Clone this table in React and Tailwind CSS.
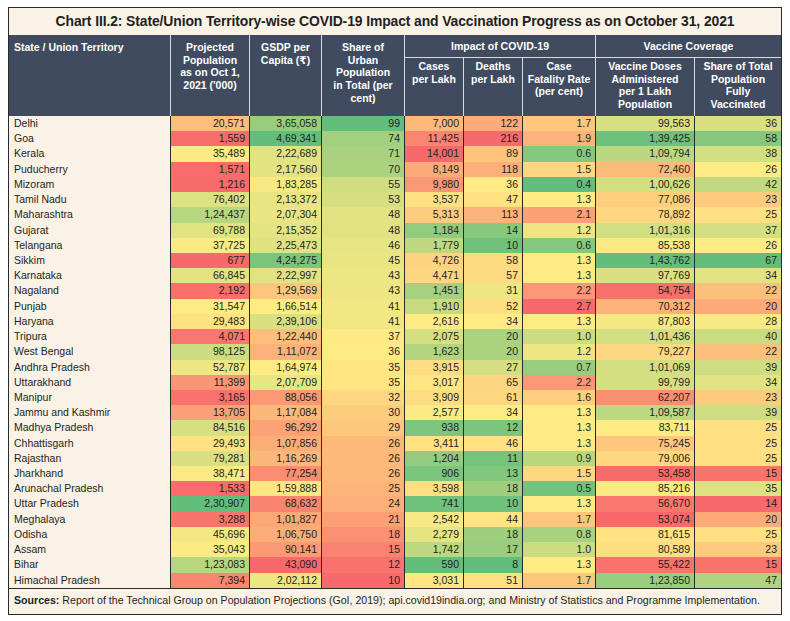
import React from "react";

const rows = [
  ["Delhi", "20,571", "3,65,058", "99", "7,000", "122", "1.7", "99,563", "36"],
  ["Goa", "1,559", "4,69,341", "74", "11,425", "216", "1.9", "1,39,425", "58"],
  ["Kerala", "35,489", "2,22,689", "71", "14,001", "89", "0.6", "1,09,794", "38"],
  ["Puducherry", "1,571", "2,17,560", "70", "8,149", "118", "1.5", "72,460", "26"],
  ["Mizoram", "1,216", "1,83,285", "55", "9,980", "36", "0.4", "1,00,626", "42"],
  ["Tamil Nadu", "76,402", "2,13,372", "53", "3,537", "47", "1.3", "77,086", "23"],
  ["Maharashtra", "1,24,437", "2,07,304", "48", "5,313", "113", "2.1", "78,892", "25"],
  ["Gujarat", "69,788", "2,15,352", "48", "1,184", "14", "1.2", "1,01,316", "37"],
  ["Telangana", "37,725", "2,25,473", "46", "1,779", "10", "0.6", "85,538", "26"],
  ["Sikkim", "677", "4,24,275", "45", "4,726", "58", "1.3", "1,43,762", "67"],
  ["Karnataka", "66,845", "2,22,997", "43", "4,471", "57", "1.3", "97,769", "34"],
  ["Nagaland", "2,192", "1,29,569", "43", "1,451", "31", "2.2", "54,754", "22"],
  ["Punjab", "31,547", "1,66,514", "41", "1,910", "52", "2.7", "70,312", "20"],
  ["Haryana", "29,483", "2,39,106", "41", "2,616", "34", "1.3", "87,803", "28"],
  ["Tripura", "4,071", "1,22,440", "37", "2,075", "20", "1.0", "1,01,436", "40"],
  ["West Bengal", "98,125", "1,11,072", "36", "1,623", "20", "1.2", "79,227", "22"],
  ["Andhra Pradesh", "52,787", "1,64,974", "35", "3,915", "27", "0.7", "1,01,069", "39"],
  ["Uttarakhand", "11,399", "2,07,709", "35", "3,017", "65", "2.2", "99,799", "34"],
  ["Manipur", "3,165", "88,056", "32", "3,909", "61", "1.6", "62,207", "23"],
  ["Jammu and Kashmir", "13,705", "1,17,084", "30", "2,577", "34", "1.3", "1,09,587", "39"],
  ["Madhya Pradesh", "84,516", "96,292", "29", "938", "12", "1.3", "83,711", "25"],
  ["Chhattisgarh", "29,493", "1,07,856", "26", "3,411", "46", "1.3", "75,245", "25"],
  ["Rajasthan", "79,281", "1,16,269", "26", "1,204", "11", "0.9", "79,006", "25"],
  ["Jharkhand", "38,471", "77,254", "26", "906", "13", "1.5", "53,458", "15"],
  ["Arunachal Pradesh", "1,533", "1,59,888", "25", "3,598", "18", "0.5", "85,216", "35"],
  ["Uttar Pradesh", "2,30,907", "68,632", "24", "741", "10", "1.3", "56,670", "14"],
  ["Meghalaya", "3,288", "1,01,827", "21", "2,542", "44", "1.7", "53,074", "20"],
  ["Odisha", "45,696", "1,06,750", "18", "2,279", "18", "0.8", "81,615", "25"],
  ["Assam", "35,043", "90,141", "15", "1,742", "17", "1.0", "80,589", "23"],
  ["Bihar", "1,23,083", "43,090", "12", "590", "8", "1.3", "55,422", "15"],
  ["Himachal Pradesh", "7,394", "2,02,112", "10", "3,031", "51", "1.7", "1,23,850", "47"],
];

// true = higher is better (green), false = higher is worse (red)
const goodHigh = [true, true, true, false, false, false, true, true];

const RED = [248, 105, 107];
const YELLOW = [255, 235, 132];
const GREEN = [99, 190, 123];

const num = (s) => parseFloat(s.replace(/,/g, ""));

const mix = (a, b, t) =>
  `rgb(${a.map((v, i) => Math.round(v + (b[i] - v) * t)).join(",")})`;

// excel style 3 colour scale, midpoint = median
const scales = goodHigh.map((good, c) => {
  const vals = rows.map((r) => num(r[c + 1])).sort((x, y) => x - y);
  const min = vals[0];
  const max = vals[vals.length - 1];
  const mid = vals[Math.floor(vals.length / 2)];
  const lowCol = good ? RED : GREEN;
  const highCol = good ? GREEN : RED;
  return (v) => {
    if (v <= mid) return mix(lowCol, YELLOW, mid === min ? 1 : (v - min) / (mid - min));
    return mix(YELLOW, highCol, (v - mid) / (max - mid));
  };
});

const cols = "grid-cols-[162px_79px_72px_83px_59px_59px_73px_99px_86px]";

const HeadCell = ({ children, className = "" }) => (
  <div className={`border-r border-white/80 text-center ${className}`}>{children}</div>
);

export default function App() {
  return (
    <div className="w-[790px] h-[621px] bg-white pt-[7px] pl-[8px] font-['Liberation_Sans','DejaVu_Sans',sans-serif] text-[#231f20]">
      <div className="w-[774px] border border-[#2a2a2a] bg-[#faf2e6]">
        <div className="h-[27px] flex items-center justify-center text-[13.9px] font-bold tracking-[-0.1px]">
          Chart III.2: State/Union Territory-wise COVID-19 Impact and Vaccination Progress as on October 31, 2021
        </div>

        <div className={`grid ${cols} grid-rows-[23px_58px] bg-[#404b60] text-white font-bold text-[10.5px] leading-[12.7px]`}>
          <div className="row-span-2 border-r border-white/80 pl-[5px] pt-[6px]">State / Union Territory</div>
          <HeadCell className="row-span-2 pt-[6px]">
            Projected<br />Population<br />as on Oct 1,<br />2021 ('000)
          </HeadCell>
          <HeadCell className="row-span-2 pt-[6px]">
            GSDP per<br />Capita (₹)
          </HeadCell>
          <HeadCell className="row-span-2 pt-[6px]">
            Share of<br />Urban<br />Population<br />in Total (per<br />cent)
          </HeadCell>
          <HeadCell className="col-span-3 border-b flex items-center justify-center">Impact of COVID-19</HeadCell>
          <div className="col-span-2 border-b border-white/80 flex items-center justify-center">Vaccine Coverage</div>
          <HeadCell className="pt-[2px]">
            Cases<br />per Lakh
          </HeadCell>
          <HeadCell className="pt-[2px]">
            Deaths<br />per Lakh
          </HeadCell>
          <HeadCell className="pt-[2px]">
            Case<br />Fatality Rate<br />(per cent)
          </HeadCell>
          <HeadCell className="pt-[2px]">
            Vaccine Doses<br />Administered<br />per 1 Lakh<br />Population
          </HeadCell>
          <div className="pt-[2px] text-center">
            Share of Total<br />Population<br />Fully<br />Vaccinated
          </div>
        </div>

        <div className="text-[10.5px]">
          {rows.map((r) => (
            <div key={r[0]} className={`grid ${cols} h-[15.22px]`}>
              <div className="border-r border-[#2a2a2a] pl-[5px] flex items-center">{r[0]}</div>
              {r.slice(1).map((v, i) => (
                <div
                  key={i}
                  className={`flex items-center justify-end pr-[4px] ${i < 7 ? "border-r border-[#2a2a2a]" : ""}`}
                  style={{ backgroundColor: scales[i](num(v)) }}
                >
                  {v}
                </div>
              ))}
            </div>
          ))}
        </div>

        <div className="h-[26px] border-t border-[#2a2a2a] flex items-center pl-[5px] text-[10.6px]">
          <span className="font-bold mr-[3px]">Sources:</span>
          Report of the Technical Group on Population Projections (GoI, 2019); api.covid19india.org; and Ministry of Statistics and Programme Implementation.
        </div>
      </div>
    </div>
  );
}
